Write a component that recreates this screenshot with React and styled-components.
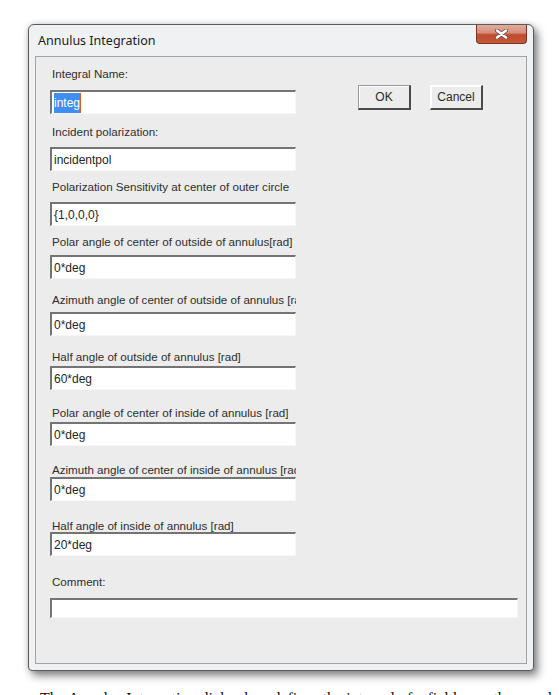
import React from 'react'
import styled, { createGlobalStyle } from 'styled-components'

const GlobalStyle = createGlobalStyle`
  html, body {
    margin: 0;
    padding: 0;
    background: #ffffff;
  }
`

const Page = styled.div`
  padding: 24px 0 0 28px;
  height: 695px;
  overflow: hidden;
  box-sizing: border-box;
`

const Window = styled.div`
  width: 506px;
  height: 647px;
  box-sizing: border-box;
  display: flex;
  flex-direction: column;
  padding: 0 6px 6px 6px;
  background: #eff1f3;
  border: 1px solid #5c5c5c;
  border-radius: 6px 6px 4px 4px;
  box-shadow: 4px 5px 8px rgba(0, 0, 0, 0.45), 0 0 6px rgba(0, 0, 0, 0.18);
`

const TitleBar = styled.div`
  height: 31px;
  flex: none;
  display: flex;
  justify-content: space-between;
  align-items: center;
`

const Title = styled.span`
  padding-left: 3px;
  font-family: "Noto Sans", "Liberation Sans", sans-serif;
  font-size: 12.5px;
  color: #1c1c1c;
`

const CloseButton = styled.div`
  align-self: flex-start;
  width: 51px;
  height: 19px;
  box-sizing: border-box;
  display: flex;
  align-items: center;
  justify-content: center;
  border: 1px solid #7a3322;
  border-top: none;
  border-radius: 0 0 4px 4px;
  background: linear-gradient(#e2ab9c 0%, #d6907a 42%, #bf4a2c 55%, #c65a3c 100%);
`

const Client = styled.div`
  flex: 1;
  display: flex;
  flex-direction: column;
  padding: 10px 8px 0 14px;
  background: #ececec;
  border: 1px solid #a3a3a3;
  font-family: "Liberation Sans", Arial, sans-serif;
  font-size: 12px;
  color: #2e2e2e;
`

const TopArea = styled.div`
  display: flex;
  align-items: flex-start;
`

const FieldColumn = styled.div`
  display: flex;
  flex-direction: column;
  width: 246px;
`

const Field = styled.div`
  display: flex;
  flex-direction: column;
  margin-bottom: ${p => p.$after}px;
`

const Label = styled.div`
  height: 14px;
  line-height: 14px;
  padding-left: 2px;
  font-size: 11.6px;
  white-space: nowrap;
  overflow: hidden;
  margin-bottom: ${p => p.$gap}px;
`

const TextBox = styled.div`
  height: ${p => p.$height || 24}px;
  box-sizing: border-box;
  display: flex;
  align-items: center;
  padding-left: 2px;
  background: #ffffff;
  border-top: 2px solid #747474;
  border-left: 2px solid #747474;
  border-right: 1px solid #f7f7f7;
  border-bottom: 1px solid #f7f7f7;
  color: #262626;
  white-space: nowrap;
`

const Selected = styled.span`
  display: inline-block;
  height: 20px;
  line-height: 20px;
  background: #3d8ff0;
  color: #ffffff;
  border-right: 1px solid #d0602a;
`

const ButtonRow = styled.div`
  display: flex;
  gap: 19px;
  margin: 18px 0 0 62px;
`

const Button = styled.div`
  width: 53px;
  height: 25px;
  box-sizing: border-box;
  display: flex;
  align-items: center;
  justify-content: center;
  background: #ececec;
  border-top: 1px solid ${p => (p.$primary ? '#9a9a9a' : '#ffffff')};
  border-left: 1px solid ${p => (p.$primary ? '#9a9a9a' : '#ffffff')};
  border-right: 2px solid #4a4a4a;
  border-bottom: 2px solid #4a4a4a;
  box-shadow: inset 1px 1px 0 #ffffff;
  color: #2a2a2a;
`

const Caption = styled.p`
  margin: 18px 0 0 12px;
  font-family: "Liberation Serif", serif;
  font-size: 16px;
  line-height: 20px;
  color: #111;
  white-space: nowrap;
`

const fields = [
  { label: 'Integral Name:', value: 'integ', selected: true, gap: 9, after: 11 },
  { label: 'Incident polarization:', value: 'incidentpol', gap: 8, after: 9 },
  { label: 'Polarization Sensitivity at center of outer circle', value: '{1,0,0,0}', gap: 8, after: 9 },
  { label: 'Polar angle of center of outside of annulus[rad]', value: '0*deg', gap: 6, after: 14 },
  { label: 'Azimuth angle of center of outside of annulus [rad]', value: '0*deg', gap: 5, after: 14 },
  { label: 'Half angle of outside of annulus [rad]', value: '60*deg', gap: 2, after: 16 },
  { label: 'Polar angle of center of inside of annulus [rad]', value: '0*deg', gap: 2, after: 17 },
  { label: 'Azimuth angle of center of inside of annulus [rad]', value: '0*deg', gap: 0, after: 18 },
  { label: 'Half angle of inside of annulus [rad]', value: '20*deg', gap: -1, after: 19 },
]

const CloseIcon = () => (
  <svg width="13" height="10" viewBox="0 0 13 10">
    <path d="M2 1.5 L11 8.5 M11 1.5 L2 8.5" stroke="#6a5048" strokeWidth="4" strokeLinecap="round" />
    <path d="M2 1.5 L11 8.5 M11 1.5 L2 8.5" stroke="#ffffff" strokeWidth="2.4" strokeLinecap="round" />
  </svg>
)

export default function App() {
  return (
    <>
      <GlobalStyle />
      <Page>
        <Window>
          <TitleBar>
            <Title>Annulus Integration</Title>
            <CloseButton>
              <CloseIcon />
            </CloseButton>
          </TitleBar>
          <Client>
            <TopArea>
              <FieldColumn>
                {fields.map(f => (
                  <Field key={f.label} $after={f.after}>
                    <Label $gap={f.gap}>{f.label}</Label>
                    <TextBox>
                      {f.selected ? <Selected>{f.value}</Selected> : f.value}
                    </TextBox>
                  </Field>
                ))}
              </FieldColumn>
              <ButtonRow>
                <Button $primary>OK</Button>
                <Button>Cancel</Button>
              </ButtonRow>
            </TopArea>
            <Field $after={0}>
              <Label $gap={9}>Comment:</Label>
              <TextBox $height={20} />
            </Field>
          </Client>
        </Window>
        <Caption>
          The Annulus Integration dialog box defines the integral of a field over the annulus.
        </Caption>
      </Page>
    </>
  )
}
